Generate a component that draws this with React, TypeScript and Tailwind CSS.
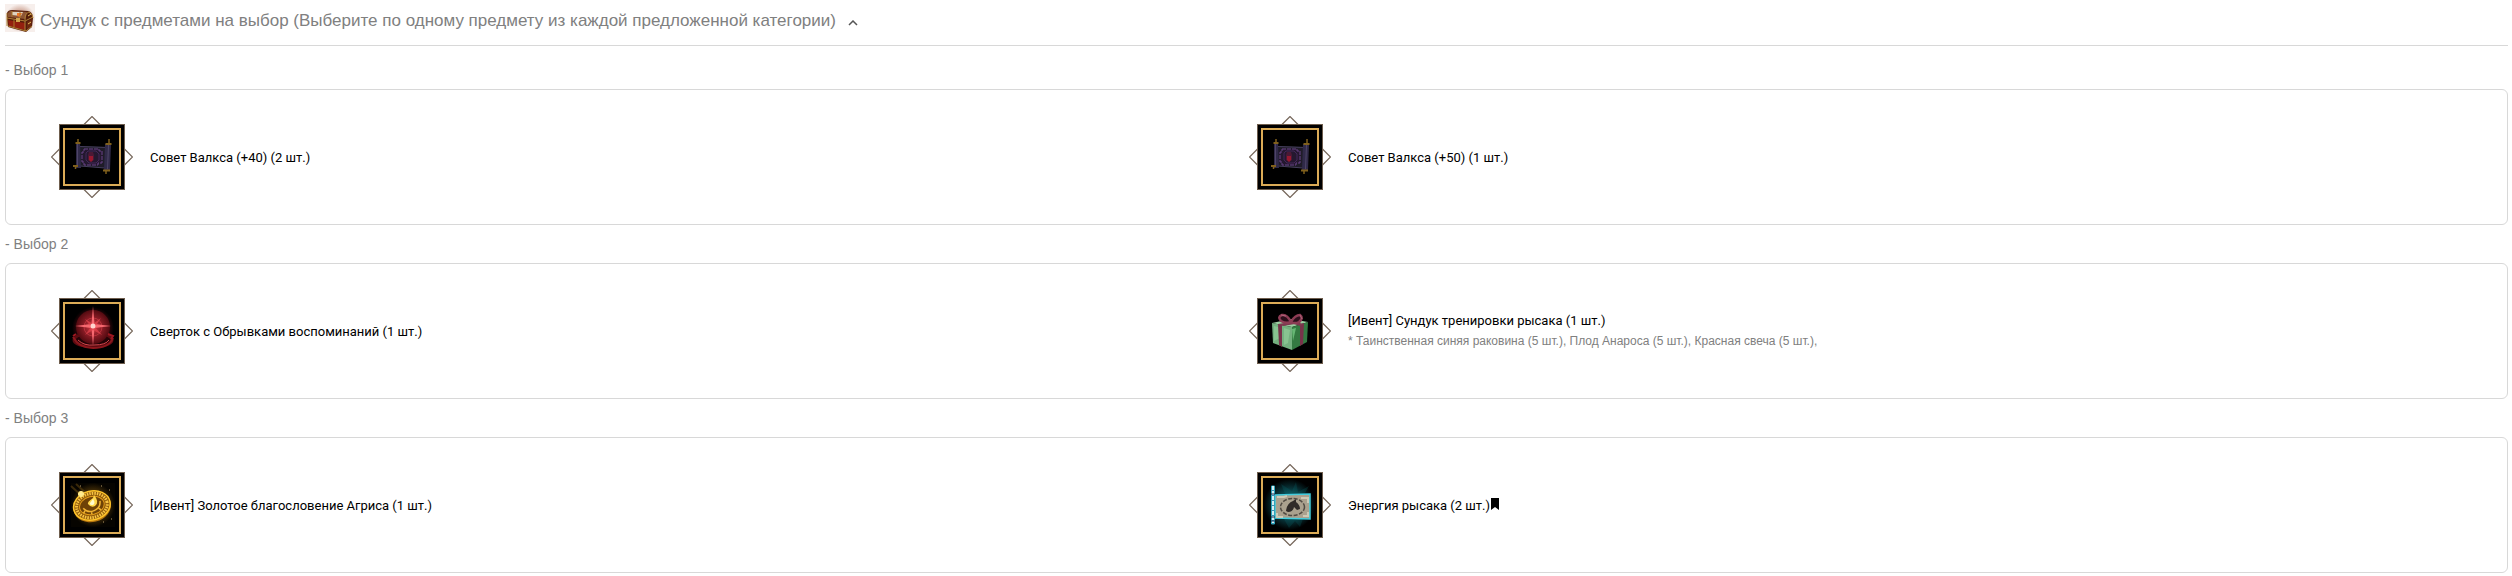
import React, { ReactNode, useState } from 'react';

type IconName = 'scroll' | 'orb' | 'gift' | 'coin' | 'banner';

interface RewardItem { name: string; icon: IconName; note?: string; bookmark?: boolean; }
interface RewardGroup { title: string; items: RewardItem[]; }

const GROUPS: RewardGroup[] = [
  {
    title: '- Выбор 1',
    items: [
      { name: 'Совет Валкса (+40) (2 шт.)', icon: 'scroll' },
      { name: 'Совет Валкса (+50) (1 шт.)', icon: 'scroll' },
    ],
  },
  {
    title: '- Выбор 2',
    items: [
      { name: 'Сверток с Обрывками воспоминаний (1 шт.)', icon: 'orb' },
      {
        name: '[Ивент] Сундук тренировки рысака (1 шт.)',
        icon: 'gift',
        note: '* Таинственная синяя раковина (5 шт.), Плод Анароса (5 шт.), Красная свеча (5 шт.),',
      },
    ],
  },
  {
    title: '- Выбор 3',
    items: [
      { name: '[Ивент] Золотое благословение Агриса (1 шт.)', icon: 'coin' },
      { name: 'Энергия рысака (2 шт.)', icon: 'banner', bookmark: true },
    ],
  },
];

const ScrollArt = () => (
  <g>
    <path d="M29 30 L56 31 L55 52 L29 50 Z" fill="#1f1c28" />
    <path d="M29 30.5 L56 31.5 M29 50 L54 52" stroke="#453e5c" strokeWidth="1" />
    <path d="M33 33 h15 v2 h3 v12 h-4 v2 h-14 v-3 h-2 v-10 h2 Z" fill="#24182f" stroke="#6b4289" strokeWidth="1" strokeDasharray="4 1" />
    <path d="M35 37 l2 -2 h8 l3 3 v6 l-3 3 h-7 l-3 -3 Z" fill="none" stroke="#432758" />
    <path d="M38 36 h4 l1 3 v5 l-3 2 l-3 -2 v-5 Z" fill="#4b1935" />
    <path d="M38 40 h4 v4 l-2 2 l-2 -2 Z" fill="#98182f" />
    <path d="M25 27 h4 l1 25 h-5 Z" fill="#302a48" />
    <path d="M26.5 28 v23" stroke="#4e4568" />
    <path d="M54 28 h6 l-1 26 h-6 Z" fill="#302a48" />
    <path d="M57.5 29 l-1 24" stroke="#4e4568" />
    <path d="M27 23 v3 M58 23 v4" stroke="#80601c" strokeWidth="1.500" />
    <path d="M24.500 27 h5 M54.500 28 h6" stroke="#80601c" strokeWidth="2" />
    <path d="M24.500 49 v4 M55 54 v4" stroke="#80601c" strokeWidth="1.500" />
    <path d="M22 50 h5 M52 54.500 h7" stroke="#80601c" strokeWidth="2" />
  </g>
);

const OrbArt = () => (
  <g>
    <circle cx="42" cy="38" r="21" fill="url(#orbGlow)" />
    <ellipse cx="42" cy="50" rx="19" ry="7" fill="#240306" stroke="#5e0b11" strokeWidth="3" />
    <circle cx="42" cy="37" r="17" fill="url(#orbFill)" />
    <circle cx="42" cy="37" r="9" fill="none" stroke="#c93a45" strokeWidth="1" opacity=".7" />
    <path d="M42 16 L43.500 34 L60 36 L43.500 38 L42 56 L40.500 38 L24 36 L40.500 34 Z" fill="#ff7077" opacity=".9" />
    <path d="M34 29 L42 34 L50 28 L44 37 L51 45 L42 40 L34 45 L40 37 Z" fill="#e2434e" opacity=".75" />
    <circle cx="42" cy="36" r="2.500" fill="#ffd5cf" />
    <path d="M22 47 Q28 58 42 58 Q58 58 62 48" fill="none" stroke="#8c171d" strokeWidth="2" />
    <path d="M27 50 Q33 56 43 55 Q55 55 58 50" fill="none" stroke="#d6474c" strokeWidth="1" />
    <path d="M22 46 l3 -2 M57 44 l5 2 l-2 3" stroke="#9e1720" strokeWidth="2" fill="none" />
  </g>
);

const GiftArt = () => (
  <g>
    <path d="M23 33 L42 29 L59 32 L43 37 Z" fill="#9ccfa2" />
    <path d="M23 33 L43 37 L43 60 L24 53 Z" fill="#74b07f" />
    <path d="M43 37 L59 32 L58 52 L43 60 Z" fill="#347a42" />
    <path d="M25 36 l4 1 l2 11 l-6 3 Z M35 38 l6 2 l-2 13 l-4 2 Z" fill="#9bd5a2" opacity=".5" />
    <path d="M43 39 l4 -1 l-3 13 Z" fill="#66b774" />
    <path d="M29 34 L33 35 L33 57 L30 55 Z M51 35 L55 33 L54 54 L51 56 Z" fill="#78334a" />
    <path d="M29 34 L48 31 L52 33 L34 36 Z M36 31 L40 30 L55 34 L51 36 Z" fill="#7d394f" />
    <path d="M42 32 Q38 24 33 25 Q28 27 32 31 Q37 34 42 32 Q46 25 51 25 Q55 28 50 32 Q46 34 42 32" fill="#2c101c" stroke="#8c3c54" strokeWidth="2.500" />
    <path d="M32 25 l5 1 M51 25 l2 4" stroke="#b0637a" strokeWidth="1" />
  </g>
);

const CoinArt = () => (
  <g>
    <rect x="20" y="19" width="44" height="44" fill="url(#coinGlow)" />
    <path d="M20 22 L32 33 M25 20 L36 30" stroke="#5e4310" strokeWidth="2" opacity=".6" />
    <g transform="rotate(-14 41 42)">
      <ellipse cx="41" cy="43" rx="19" ry="15" fill="#b9780f" />
      <ellipse cx="41" cy="41.500" rx="18.500" ry="14.500" fill="#8f5a0a" stroke="#ffc52b" strokeWidth="1.500" />
      <ellipse cx="41" cy="41.500" rx="15.500" ry="12" fill="none" stroke="#f7c343" strokeWidth="3" strokeDasharray="1.500 1" />
      <ellipse cx="41" cy="41.500" rx="12.500" ry="9" fill="#6e4207" stroke="#e39d1c" />
      <path d="M32 42 Q35 48 42 47 Q49 46 50 39 M33 45 l-2 2 M39 48 v2 M47 46 l2 2" fill="none" stroke="#f1b331" strokeWidth="1.500" />
    </g>
    <path d="M43 31 Q49 38 44 42 Q40 44 37 40 Q36 38 42 34 Z" fill="#ffd74c" />
    <path d="M42 35 Q45 39 42 41 Q38 41 39 39 Z" fill="#fffbd0" />
    <circle cx="30" cy="30" r="3" fill="#ffe678" />
    <path d="M27 30 h6 M30 27 v6" stroke="#ffeda0" />
    <path d="M29 22 h1 M50 22 h1 M58 26 h1 M60 55 h1 M52 58 h1" stroke="#b79b69" />
  </g>
);

const BannerArt = () => (
  <g>
    <rect x="15" y="15" width="51" height="51" fill="url(#bannerGlow)" />
    <path d="M36 30 L32 20 L43 27 L47 18 L49 28 L60 22 L55 31 Z M35 55 L40 64 L46 57 L51 63 L54 55 Z" fill="#08767c" opacity=".2" />
    <path d="M26 31 L61 30 L61 55 L26 54 Z" fill="#aaa18e" stroke="#42cbdc" strokeWidth="1.500" />
    <path d="M28 33 h7 l3 -1 M52 34 h7 v5 M28 49 v4 h6 M54 52 h5 v-4" stroke="#cec9b5" strokeWidth="2" fill="none" />
    <ellipse cx="43.500" cy="43" rx="12" ry="8.500" fill="none" stroke="#514b43" strokeWidth="1.500" strokeDasharray="4 1.500" />
    <path d="M37 47 Q38 39 44 37 L47 35 L47 38 Q51 41 51 45 L48 46 L45 43 Q44 48 39 48 Z" fill="#302b28" />
    <path d="M22.500 22 h3 v38 h-3 Z" fill="#3d8db4" stroke="#2ea6bc" />
    <path d="M24 22 v37" stroke="#d8edf1" strokeWidth="2" strokeDasharray="4 1" />
    <path d="M22 30 h4 M22 53 h4 M22 57 h4" stroke="#1e3151" strokeWidth="1" />
  </g>
);

const ART: Record<IconName, ReactNode> = {
  scroll: <ScrollArt />,
  orb: <OrbArt />,
  gift: <GiftArt />,
  coin: <CoinArt />,
  banner: <BannerArt />,
};

// Square gold frame with four corner arrows behind it
const ItemIcon = ({ name }: { name: IconName }) => (
  <svg className="w-[82px] h-[82px] shrink-0" viewBox="0 0 82 82" aria-hidden="true">
    <defs>
      <radialGradient id="orbFill" cx=".5" cy=".5" r=".5">
        <stop offset="0" stopColor="#d23a43" />
        <stop offset=".45" stopColor="#96202a" />
        <stop offset="1" stopColor="#520a10" />
      </radialGradient>
      <radialGradient id="orbGlow">
        <stop offset=".6" stopColor="#4b0910" />
        <stop offset="1" stopColor="#000" />
      </radialGradient>
      <radialGradient id="coinGlow">
        <stop offset="0" stopColor="#a87508" />
        <stop offset=".7" stopColor="#382606" />
        <stop offset="1" stopColor="#060400" />
      </radialGradient>
      <radialGradient id="bannerGlow">
        <stop offset=".3" stopColor="#0f626c" />
        <stop offset="1" stopColor="#000" />
      </radialGradient>
    </defs>
    <path d="M33 8.500 L41 .5 L49 8.500 M33 73.500 L41 81.500 L49 73.500 M8.500 33 L.5 41 L8.500 49 M73.500 33 L81.500 41 L73.500 49" fill="none" stroke="#75665a" strokeWidth="1.200" />
    <rect x="8.500" y="8.500" width="65" height="65" fill="#000" stroke="#6f5e4e" />
    <rect x="13" y="13" width="56" height="56" fill="#000" stroke="#dcac57" strokeWidth="2" />
    {ART[name]}
  </svg>
);

const ChestIcon = () => (
  <svg className="w-[30px] h-[30px] shrink-0" viewBox="0 0 30 30" aria-hidden="true">
    <defs>
      <radialGradient id="chestGlow">
        <stop offset=".4" stopColor="#c89a88" />
        <stop offset="1" stopColor="#f7efec" />
      </radialGradient>
    </defs>
    <rect width="30" height="28" fill="url(#chestGlow)" />
    <path d="M2 15 L2 9 Q3 6 7 6 L23 7 Q28 8 28 14 L27 23 L21 28 L3 23 Z" fill="#551d0b" />
    <path d="M3 9 Q5 6 8 7 L22 8 L20 15 L3 13 Z" fill="#8d5534" />
    <path d="M7 8 L18 8 L16 12 L7 11 Z" fill="#ded3c0" />
    <path d="M12 9 l5 0 l-2 4 l-3 -1 Z" fill="#ee7929" />
    <path d="M3 16 L20 19 L20 26 L4 22 Z" fill="#93200f" />
    <path d="M22 18 L27 15 L26 22 L22 25 Z" fill="#6d2810" />
    <path d="M2 14 L20 17 L28 13 M3 22 L21 27 L27 22 M20 17 V27 M2 9 V22 M20 16 Q20 9 24 8 Q28 10 28 14" fill="none" stroke="#b08238" strokeWidth="1" />
    <path d="M7 7 V13 M9 16 V23 M15 8 V14" stroke="#a8792d" />
    <path d="M11 14 h4 v4 h-4 Z" fill="#d1a54f" />
    <path d="M23 12 l3 -2 M23 20 l3 -2" stroke="#e5bd59" />
  </svg>
);

const RewardCell = ({ item }: { item: RewardItem }) => (
  <li className="flex items-center">
    <ItemIcon name={item.icon} />
    <div className="ml-[17px]">
      <p className="flex items-center font-[Roboto,sans-serif] text-[13px] leading-[21px] text-black">
        {item.name}
        {item.bookmark && (
          <svg className="w-2 h-3 ml-px mb-0.5" viewBox="0 0 8 12" aria-hidden="true">
            <path d="M0 0 H8 V12 L4 9 L0 12 Z" fill="#000" />
          </svg>
        )}
      </p>
      {item.note && <p className="text-[12px] leading-[21px]">{item.note}</p>}
    </div>
  </li>
);

export default function App() {
  const [isOpen, setIsOpen] = useState(true);

  return (
    <main className="bg-white pl-[5px] pr-1 pt-1 font-['Liberation_Sans',Arial,sans-serif] text-[#808080]">
      <h1 className="border-b border-[#d8d8d8] pb-[11px]">
        <button type="button" aria-expanded={isOpen} onClick={() => setIsOpen(o => !o)} className="flex items-center text-left cursor-pointer">
          <ChestIcon />
          <span className="ml-[5px] pt-1 text-[17px] leading-[26px]">Сундук с предметами на выбор (Выберите по одному предмету из каждой предложенной категории)</span>
          <svg className="w-[10px] h-[6px] ml-3 mt-2" viewBox="0 0 10 6" aria-hidden="true">
            <path d="M1 5 L5 1 L9 5" fill="none" stroke="#555" strokeWidth="1.500" />
          </svg>
        </button>
      </h1>
      {isOpen && (
        <div className="pt-[5px]">
          {GROUPS.map(group => (
            <section key={group.title}>
              <h2 className="text-[14px] leading-[38px]">{group.title}</h2>
              <ul className="grid grid-cols-2 rounded-md border border-[#d8d8d8] pl-[45px] pr-[60px] py-[26px]">
                {group.items.map(item => <RewardCell key={item.name} item={item} />)}
              </ul>
            </section>
          ))}
        </div>
      )}
    </main>
  );
}
